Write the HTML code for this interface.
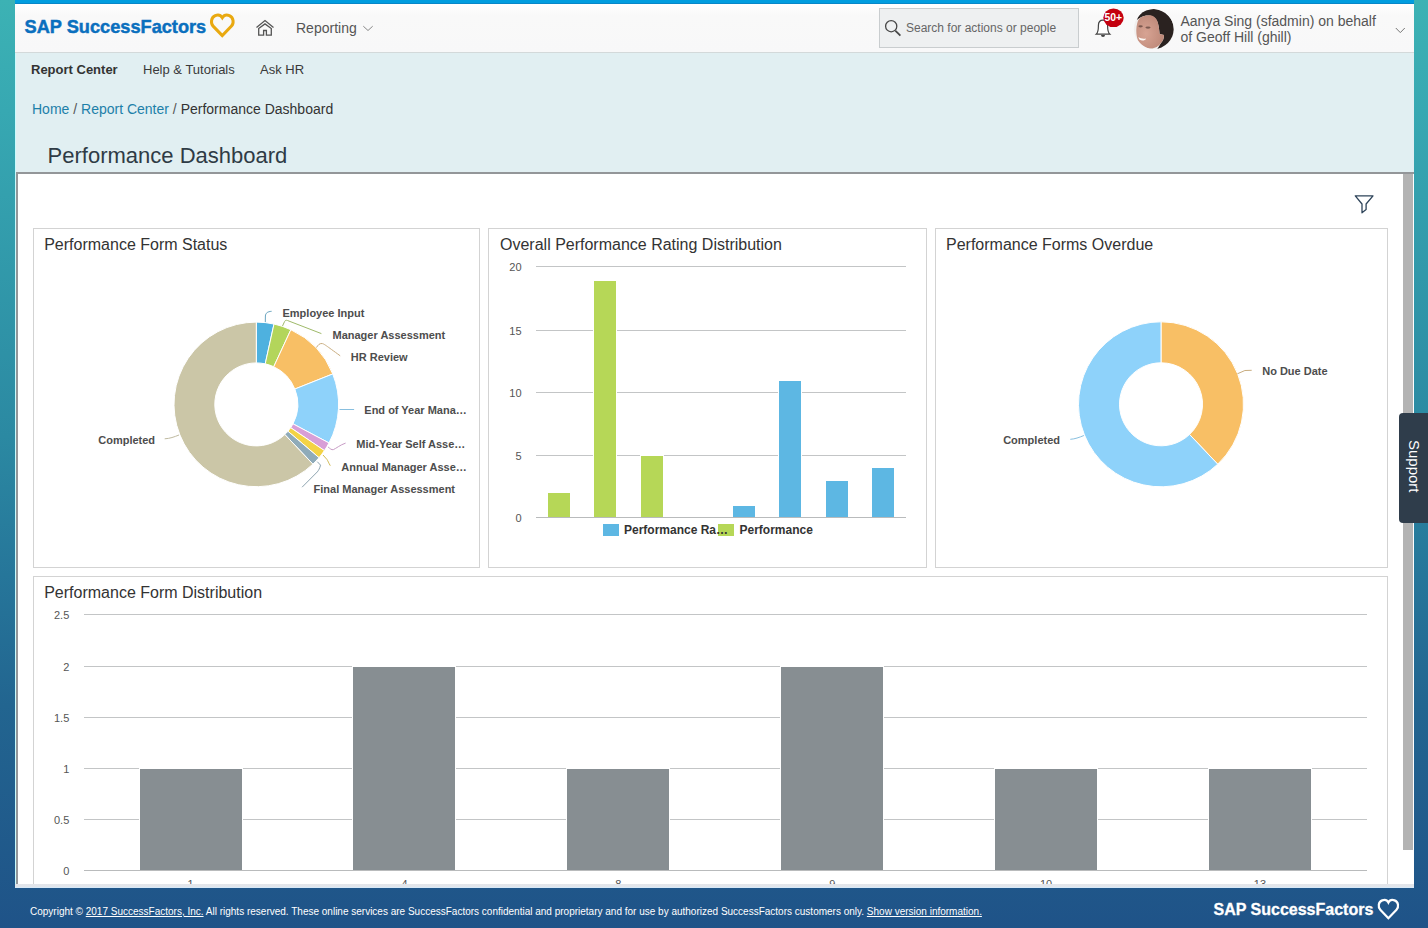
<!DOCTYPE html>
<html><head><meta charset="utf-8">
<style>
*{margin:0;padding:0;box-sizing:border-box}
html,body{width:1428px;height:928px;overflow:hidden}
body{position:relative;font-family:"Liberation Sans",sans-serif;background:linear-gradient(180deg,#3cb2b4 0%,#37a8b2 12%,#2b89a2 47%,#26769a 62%,#226590 76%,#1f5388 100%);}
.a{position:absolute;white-space:nowrap;line-height:1}
#topbar{position:absolute;left:15px;top:0;width:1399px;height:4px;background:linear-gradient(180deg,#009ddf 0,#009ddf 75%,#0787c8 75%)}
#header{position:absolute;left:15px;top:4px;width:1399px;height:49px;background:linear-gradient(180deg,#ffffff 0%,#f9f9f9 25%,#f8f8f9 100%);border-bottom:1px solid #d3d9da}
#sub{position:absolute;left:15px;top:53px;width:1399px;height:835px;background:#e1eff2;border-left:1px solid #c9fbfd}
#panel{position:absolute;left:16px;top:172px;width:1398px;height:712px;background:#fff;border-top:2px solid #939699;border-left:2px solid #939699}
#strip{position:absolute;left:15px;top:884px;width:1399px;height:4px;background:linear-gradient(180deg,#e3e5ea 0,#e1e6ec 75%,#d8e9f8 75%,#d8e9f8 100%)}
#thumb{position:absolute;left:1403px;top:174px;width:10px;height:676px;background:#b3b3b3}
.card{position:absolute;border:1px solid #d3d3d3;background:#fff}
.ct{font-size:16px;color:#333}
#support{position:absolute;left:1399px;top:413px;width:29px;height:110px;background:#2f3d4b;border-radius:4px 0 0 4px}
</style></head>
<body>
<div id="topbar"></div>
<div id="header"></div>
<div id="sub"></div>
<div id="panel"></div>
<div id="strip"></div>
<div id="thumb"></div>

<div class="card" style="left:33px;top:228px;width:447px;height:340px"></div>
<div class="card" style="left:488px;top:228px;width:439px;height:340px"></div>
<div class="card" style="left:935px;top:228px;width:453px;height:340px"></div>
<div class="card" style="left:33px;top:576px;width:1355px;height:308px;border-bottom:none"></div>

<!-- header text -->
<div class="a" style="left:24.6px;top:18px;font-size:18.2px;font-weight:700;color:#0a6fbe;-webkit-text-stroke:0.45px #0a6fbe">SAP SuccessFactors</div>
<div class="a" style="left:296px;top:21.3px;font-size:14px;color:#555">Reporting</div>
<div class="a" style="left:879px;top:8px;width:200px;height:40px;background:#eef0f1;border:1px solid #c9cdcf"></div>
<div class="a" style="left:906px;top:21.8px;font-size:12px;color:#666">Search for actions or people</div>
<div class="a" style="left:1180.5px;top:14.2px;font-size:14px;color:#555">Aanya Sing (sfadmin) on behalf</div>
<div class="a" style="left:1180.5px;top:30.2px;font-size:14px;color:#555">of Geoff Hill (ghill)</div>

<!-- subnav -->
<div class="a" style="left:31px;top:62.5px;font-size:13px;font-weight:700;color:#333">Report Center</div>
<div class="a" style="left:143px;top:62.5px;font-size:13px;color:#3a3a3a">Help &amp; Tutorials</div>
<div class="a" style="left:260px;top:62.5px;font-size:13px;color:#3a3a3a">Ask HR</div>
<div class="a" style="left:32px;top:102.4px;font-size:14px;color:#555"><span style="color:#1d80a9">Home</span> / <span style="color:#1d80a9">Report Center</span> / <span style="color:#333">Performance Dashboard</span></div>
<div class="a" style="left:47.6px;top:145.4px;font-size:22px;color:#2f3b45">Performance Dashboard</div>

<!-- card titles -->
<div class="a ct" style="left:44.2px;top:236.5px">Performance Form Status</div>
<div class="a ct" style="left:500px;top:236.5px">Overall Performance Rating Distribution</div>
<div class="a ct" style="left:946px;top:236.5px">Performance Forms Overdue</div>
<div class="a ct" style="left:44.2px;top:584.6px">Performance Form Distribution</div>

<div id="support"></div>
<div class="a" style="left:1400px;top:440px;font-size:15px;color:#fff;transform-origin:0 0;transform:translate(22px,0) rotate(90deg)">Support</div>

<!-- footer -->
<div class="a" style="left:30px;top:906.7px;font-size:10px;color:#fff">Copyright © <u>2017 SuccessFactors, Inc.</u> All rights reserved. These online services are SuccessFactors confidential and proprietary and for use by authorized SuccessFactors customers only. <u>Show version information.</u></div>
<div class="a" style="left:1213.5px;top:902px;font-size:16px;font-weight:700;color:#fff;-webkit-text-stroke:0.3px #fff">SAP SuccessFactors</div>

<!--SVG-->
<svg class="ov" width="1428" height="928" viewBox="0 0 1428 928" style="position:absolute;left:0;top:0">
<path d="M222.3,35.6 L213.1,26.1 C210.5,23.3 210.9,17.5 215.2,15.6 C218.4,14.4 221.1,15.8 222.3,17.7 C223.5,15.8 226.2,14.4 229.4,15.6 C233.7,17.5 234.1,23.3 231.5,26.1 Z" fill="none" stroke="#e9a910" stroke-width="3" stroke-linejoin="miter"/>
<g fill="none" stroke="#555" stroke-width="1.3"><path d="M256.5,27.6 L265,20.6 L273.5,27.6"/><path d="M258.7,28.6 L265,23.9 L271.3,28.6 V35.2 H266.4 V30.5 H263.6 V35.2 H258.7 Z"/></g>
<path d="M363.3,26.2 L368,30.5 L372.7,26.2" fill="none" stroke="#888" stroke-width="1"/>
<path d="M1395.8,28 L1400.3,32.6 L1404.8,28" fill="none" stroke="#777" stroke-width="1"/>
<g fill="none" stroke="#474747"><circle cx="891.2" cy="26.2" r="5.6" stroke-width="1.3"/><path d="M895.3,30.6 L900.4,35.6" stroke-width="1.8"/></g>
<g fill="#fff" stroke="#444" stroke-width="1.2"><path d="M1096.2,34.2 C1098.5,32 1098.4,29 1098.4,25.5 C1098.4,22 1100.3,20.2 1103,20.2 C1105.7,20.2 1107.6,22 1107.6,25.5 C1107.6,29 1107.5,32 1109.9,34.2 Z"/></g>
<path d="M1101,35 a2,2 0 0 0 4,0" fill="#444"/>
<ellipse cx="1113.5" cy="17.8" rx="10.2" ry="9.3" fill="#c4000f"/>
<text x="1113.3" y="21.4" font-size="10.4" font-weight="700" fill="#fff" text-anchor="middle">50+</text>
<defs><clipPath id="av"><circle cx="1153.8" cy="29" r="19.9"/></clipPath><radialGradient id="fg" cx="0.35" cy="0.55" r="0.6"><stop offset="0" stop-color="#d7a393"/><stop offset="1" stop-color="#bf8a7a"/></radialGradient></defs>
<g clip-path="url(#av)"><rect x="1133" y="8" width="42" height="42" fill="#f1efee"/><path d="M1137,20 C1139,12 1146,9 1152,9 C1163,9 1174,17 1174,30 C1174,40 1168,47 1160,49.5 L1157,49.5 L1161,43 C1163,41 1164,38 1164,35 L1159.6,34 C1159,28 1158.5,24 1157,21 C1155,16 1150,15 1146,15.5 C1142,16 1139.5,18 1137,20 Z" fill="#2a2220"/><path d="M1139,19 C1142,16 1146,15.3 1150,15.3 C1154,15.5 1157,19 1158,23 C1159,27 1159.3,31 1159.6,34 L1164,35 C1164,38 1163,41 1161,43 C1159,46 1155,48.5 1151,48.5 C1146,48.5 1142,46 1140,43 C1137,40 1136.3,35 1136.3,30 C1136.5,25 1137.5,21 1139,19 Z" fill="url(#fg)"/><path d="M1138.3,37 C1140.8,38.6 1143.5,39.1 1146.2,38.4 C1145.2,40.6 1142,41.2 1139.4,39.6 Z" fill="#fbf7f4"/><ellipse cx="1140.6" cy="26.3" rx="2.2" ry="1.1" fill="#5a3f38" opacity="0.7"/><ellipse cx="1148" cy="27.6" rx="2.6" ry="1.1" fill="#5a3f38" opacity="0.7"/></g>
<path d="M1355.3,195.8 H1373 L1366.1,204 V209.6 L1362,212.8 V204 Z" fill="none" stroke="#2e445a" stroke-width="1.3" stroke-linejoin="round"/>
<path d="M1388.4,918.2 L1380.3,909.8 C1377.8,907.1 1378.2,901.9 1382.2,900.4 C1385.2,899.3 1387.5,900.8 1388.4,902.6 C1389.3,900.8 1391.6,899.3 1394.6,900.4 C1398.6,901.9 1399,907.1 1396.5,909.8 Z" fill="none" stroke="#fff" stroke-width="2.2"/>
<path d="M256.30,322.10A82.3,82.3 0 0 1 273.99,324.02L265.22,363.87A41.5,41.5 0 0 0 256.30,362.90Z" fill="#4eb1df" stroke="#fff" stroke-width="1" stroke-linejoin="round"/>
<path d="M273.99,324.02A82.3,82.3 0 0 1 290.86,329.71L273.73,366.74A41.5,41.5 0 0 0 265.22,363.87Z" fill="#b3d55b" stroke="#fff" stroke-width="1" stroke-linejoin="round"/>
<path d="M290.86,329.71A82.3,82.3 0 0 1 332.75,373.94L294.85,389.04A41.5,41.5 0 0 0 273.73,366.74Z" fill="#f8bf65" stroke="#fff" stroke-width="1" stroke-linejoin="round"/>
<path d="M332.75,373.94A82.3,82.3 0 0 1 329.01,442.95L292.97,423.84A41.5,41.5 0 0 0 294.85,389.04Z" fill="#8ed2fa" stroke="#fff" stroke-width="1" stroke-linejoin="round"/>
<path d="M329.01,442.95A82.3,82.3 0 0 1 324.42,450.59L290.65,427.69A41.5,41.5 0 0 0 292.97,423.84Z" fill="#d89fd7" stroke="#fff" stroke-width="1" stroke-linejoin="round"/>
<path d="M324.42,450.59A82.3,82.3 0 0 1 319.03,457.68L287.93,431.27A41.5,41.5 0 0 0 290.65,427.69Z" fill="#f3d345" stroke="#fff" stroke-width="1" stroke-linejoin="round"/>
<path d="M319.03,457.68A82.3,82.3 0 0 1 312.90,464.15L284.84,434.53A41.5,41.5 0 0 0 287.93,431.27Z" fill="#8fabb9" stroke="#fff" stroke-width="1" stroke-linejoin="round"/>
<path d="M312.90,464.15A82.3,82.3 0 1 1 256.30,322.10L256.30,362.90A41.5,41.5 0 1 0 284.84,434.53Z" fill="#cbc6a7" stroke="#fff" stroke-width="1" stroke-linejoin="round"/>
<path d="M265.3,322 L265.4,316 C265.6,313 267.5,311.6 271.6,311.3" fill="none" stroke="#6aa5c0" stroke-width="1"/>
<path d="M282.5,326 L284.6,321.5 C285.2,320.3 286.2,320 287.5,320.5 L321.4,333.6" fill="none" stroke="#9fba6a" stroke-width="1"/>
<path d="M316.5,347.5 C318,345 319.5,343.3 322,343.5 C324,343.8 326,345.5 340.2,355.8" fill="none" stroke="#c9ad80" stroke-width="1"/>
<path d="M339.5,409.5 L354.1,409.5" fill="none" stroke="#88bfdf" stroke-width="1"/>
<path d="M328.1,447 C330,448.5 331.5,450.2 333.4,449.6 C336,448.5 340,445 345.6,443.1" fill="none" stroke="#c79bc5" stroke-width="1"/>
<path d="M323,455 L327,459.5 C328,461 328.6,462.9 330.3,465.7" fill="none" stroke="#d2bb55" stroke-width="1"/>
<path d="M317.3,461.7 L320.5,465.1 C320,468 318.5,470.5 317.3,471.9 L302.1,487.2" fill="none" stroke="#8da4b0" stroke-width="1"/>
<path d="M179,435 C174,437 170,438.5 164.7,438.8" fill="none" stroke="#bfbaa0" stroke-width="1"/>
<text x="282.5" y="317.3" font-size="11" font-weight="700" fill="#4d4d4d" text-anchor="start">Employee Input</text>
<text x="332.5" y="338.6" font-size="11" font-weight="700" fill="#4d4d4d" text-anchor="start">Manager Assessment</text>
<text x="350.8" y="360.6" font-size="11" font-weight="700" fill="#4d4d4d" text-anchor="start">HR Review</text>
<text x="364.3" y="414.4" font-size="11" font-weight="700" fill="#4d4d4d" text-anchor="start">End of Year Mana…</text>
<text x="356.3" y="448.3" font-size="11" font-weight="700" fill="#4d4d4d" text-anchor="start">Mid-Year Self Asse…</text>
<text x="341.3" y="470.6" font-size="11" font-weight="700" fill="#4d4d4d" text-anchor="start">Annual Manager Asse…</text>
<text x="313.6" y="492.7" font-size="11" font-weight="700" fill="#4d4d4d" text-anchor="start">Final Manager Assessment</text>
<text x="155.1" y="444.2" font-size="11" font-weight="700" fill="#4d4d4d" text-anchor="end">Completed</text>
<path d="M1161.00,321.80A82.5,82.5 0 0 1 1217.74,464.19L1189.54,434.43A41.5,41.5 0 0 0 1161.00,362.80Z" fill="#f8bf65" stroke="#fff" stroke-width="1" stroke-linejoin="round"/>
<path d="M1217.74,464.19A82.5,82.5 0 1 1 1161.00,321.80L1161.00,362.80A41.5,41.5 0 1 0 1189.54,434.43Z" fill="#8ed2fa" stroke="#fff" stroke-width="1" stroke-linejoin="round"/>
<path d="M1237.4,373.8 L1244.9,370.5 L1251.7,370.3" fill="none" stroke="#c9ad80" stroke-width="1"/>
<path d="M1083.9,435.5 C1079,437.5 1075,439 1070.3,439.3" fill="none" stroke="#88bfdf" stroke-width="1"/>
<text x="1262.2" y="374.8" font-size="11" font-weight="700" fill="#4d4d4d">No Due Date</text>
<text x="1060" y="443.8" font-size="11" font-weight="700" fill="#4d4d4d" text-anchor="end">Completed</text>
<path d="M536,266.5 H906" stroke="#c3c5c6" stroke-width="1"/>
<text x="521.6" y="270.6" font-size="11" fill="#555" text-anchor="end">20</text>
<path d="M536,330.5 H906" stroke="#c3c5c6" stroke-width="1"/>
<text x="521.6" y="334.6" font-size="11" fill="#555" text-anchor="end">15</text>
<path d="M536,392.5 H906" stroke="#c3c5c6" stroke-width="1"/>
<text x="521.6" y="396.6" font-size="11" fill="#555" text-anchor="end">10</text>
<path d="M536,455.5 H906" stroke="#c3c5c6" stroke-width="1"/>
<text x="521.6" y="459.6" font-size="11" fill="#555" text-anchor="end">5</text>
<text x="521.6" y="521.6" font-size="11" fill="#555" text-anchor="end">0</text>
<rect x="547" y="492" width="24" height="25" fill="#fff"/>
<rect x="548" y="493" width="22" height="24" fill="#b6d757"/>
<rect x="593" y="280" width="24" height="237" fill="#fff"/>
<rect x="594" y="281" width="22" height="236" fill="#b6d757"/>
<rect x="640" y="455" width="24" height="62" fill="#fff"/>
<rect x="641" y="456" width="22" height="61" fill="#b6d757"/>
<rect x="732" y="505" width="24" height="12" fill="#fff"/>
<rect x="733" y="506" width="22" height="11" fill="#5db7e3"/>
<rect x="778" y="380" width="24" height="137" fill="#fff"/>
<rect x="779" y="381" width="22" height="136" fill="#5db7e3"/>
<rect x="825" y="480" width="24" height="37" fill="#fff"/>
<rect x="826" y="481" width="22" height="36" fill="#5db7e3"/>
<rect x="871" y="467" width="24" height="50" fill="#fff"/>
<rect x="872" y="468" width="22" height="49" fill="#5db7e3"/>
<path d="M536,517.5 H906" stroke="#b9bbbc" stroke-width="1"/>
<rect x="603" y="524" width="16" height="12" fill="#5db7e3"/>
<rect x="718" y="524" width="16" height="12" fill="#b6d757"/>
<text x="624" y="533.9" font-size="12" font-weight="700" fill="#333">Performance Ra…</text>
<text x="739.5" y="533.9" font-size="12" font-weight="700" fill="#333">Performance</text>
<defs><clipPath id="c4"><rect x="0" y="0" width="1428" height="884"/></clipPath></defs><g clip-path="url(#c4)">
<path d="M84,614.5 H1367" stroke="#c3c5c6" stroke-width="1"/>
<text x="69.3" y="618.6" font-size="11" fill="#555" text-anchor="end">2.5</text>
<path d="M84,666.5 H1367" stroke="#c3c5c6" stroke-width="1"/>
<text x="69.3" y="670.6" font-size="11" fill="#555" text-anchor="end">2</text>
<path d="M84,717.5 H1367" stroke="#c3c5c6" stroke-width="1"/>
<text x="69.3" y="721.6" font-size="11" fill="#555" text-anchor="end">1.5</text>
<path d="M84,768.5 H1367" stroke="#c3c5c6" stroke-width="1"/>
<text x="69.3" y="772.6" font-size="11" fill="#555" text-anchor="end">1</text>
<path d="M84,819.5 H1367" stroke="#c3c5c6" stroke-width="1"/>
<text x="69.3" y="823.6" font-size="11" fill="#555" text-anchor="end">0.5</text>
<text x="69.3" y="874.6" font-size="11" fill="#555" text-anchor="end">0</text>
<rect x="139" y="768" width="104" height="102" fill="#fff"/>
<rect x="140" y="769" width="102" height="101" fill="#878e92"/>
<text x="190.6" y="888" font-size="11" fill="#555" text-anchor="middle">1</text>
<rect x="352" y="666" width="104" height="204" fill="#fff"/>
<rect x="353" y="667" width="102" height="203" fill="#878e92"/>
<text x="404.5" y="888" font-size="11" fill="#555" text-anchor="middle">4</text>
<rect x="566" y="768" width="104" height="102" fill="#fff"/>
<rect x="567" y="769" width="102" height="101" fill="#878e92"/>
<text x="618.3" y="888" font-size="11" fill="#555" text-anchor="middle">8</text>
<rect x="780" y="666" width="104" height="204" fill="#fff"/>
<rect x="781" y="667" width="102" height="203" fill="#878e92"/>
<text x="832.2" y="888" font-size="11" fill="#555" text-anchor="middle">9</text>
<rect x="994" y="768" width="104" height="102" fill="#fff"/>
<rect x="995" y="769" width="102" height="101" fill="#878e92"/>
<text x="1046.0" y="888" font-size="11" fill="#555" text-anchor="middle">10</text>
<rect x="1208" y="768" width="104" height="102" fill="#fff"/>
<rect x="1209" y="769" width="102" height="101" fill="#878e92"/>
<text x="1259.9" y="888" font-size="11" fill="#555" text-anchor="middle">13</text>
<path d="M84,870.5 H1367" stroke="#b9bbbc" stroke-width="1"/>
</g></svg>
<!--/SVG-->
</body></html>
